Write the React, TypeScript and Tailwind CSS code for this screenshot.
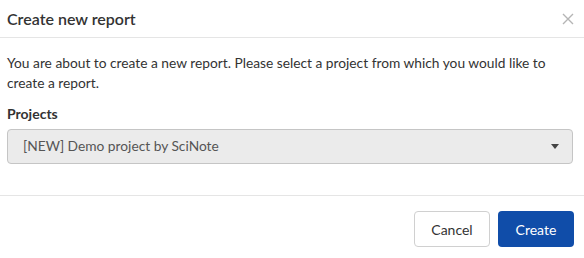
export default function App() {
  return (
    <div
      className="w-[584px] h-[258px] bg-white text-[#333] flex flex-col"
      style={{ fontFamily: "Lato, 'Noto Sans', sans-serif" }}
    >
      {/* header */}
      <div className="h-[38px] flex items-center justify-between pl-[7px] pr-[10px] border-b border-[#e5e5e5]">
        <h4 className="text-[16px] font-semibold leading-none">Create new report</h4>
        <button className="text-[#b5b5b5]">
          <svg width="12" height="12" viewBox="0 0 12 12" stroke="currentColor" strokeWidth="1.4">
            <path d="M1 1 L11 11 M11 1 L1 11" />
          </svg>
        </button>
      </div>

      {/* body */}
      <div className="px-[7px] pt-[15px] h-[158px] border-b border-[#e5e5e5]">
        <p className="text-[13.75px] leading-[20px]">
          You are about to create a new report. Please select a project from which you would like to
          create a report.
        </p>
        <label className="block mt-[11px] text-[14px] font-bold leading-[20px]">Projects</label>
        <div className="mt-[5px] mr-[4px] h-[35px] rounded-[4px] border border-[#c5c5c5] bg-[#ebebeb] flex items-center justify-between pl-[15px] pr-[13px]">
          <span className="text-[13.75px] text-[#555]">[NEW] Demo project by SciNote</span>
          <svg width="8" height="5" viewBox="0 0 8 5" className="text-[#444]">
            <path d="M0 0 H8 L4 5 Z" fill="currentColor" />
          </svg>
        </div>
      </div>

      {/* footer */}
      <div className="flex justify-end gap-[8px] pr-[10px] pt-[15px]">
        <button className="w-[76px] h-[36px] rounded-[4px] border border-[#d0d0d0] bg-white text-[14px] text-[#333]">
          Cancel
        </button>
        <button className="w-[76px] h-[36px] rounded-[4px] bg-[#104da9] text-white text-[14px]">
          Create
        </button>
      </div>
    </div>
  );
}
